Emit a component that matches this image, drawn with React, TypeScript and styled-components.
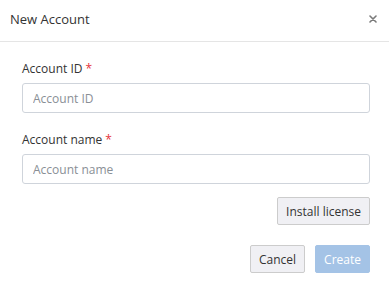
import React from 'react';
import styled, { createGlobalStyle } from 'styled-components';

const Global = createGlobalStyle`
	body {
		margin: 0;
		background: #ffffff;
		font-family: 'Open Sans', 'Liberation Sans', sans-serif;
	}
`;

const Dialog = styled.div`
	width: 389px;
	height: 288px;
	background: #ffffff;
	display: flex;
	flex-direction: column;
`;

const Header = styled.div`
	display: flex;
	align-items: center;
	justify-content: space-between;
	padding: 0 9px 0 10px;
	border-bottom: 1px solid #e5e5e5;
	box-sizing: border-box;
	height: 42px;
`;

const Title = styled.div`
	font-size: 13px;
	color: #333333;
	margin-top: -4px;
`;

const Close = styled.div`
	width: 14px;
	height: 14px;
	display: flex;
	align-items: center;
	justify-content: center;
	margin-top: -4px;
`;

const Body = styled.div`
	padding: 19px 19px 0 22px;
	display: flex;
	flex-direction: column;
`;

const Field = styled.div`
	display: flex;
	flex-direction: column;
	margin-bottom: 19px;
`;

const Label = styled.label`
	font-size: 12px;
	line-height: 16px;
	color: #333333;
	margin-bottom: 6px;
`;

const Required = styled.span`
	color: #e5323c;
	margin-left: 3px;
`;

const Input = styled.input`
	height: 30px;
	box-sizing: border-box;
	border: 1px solid #cfd4db;
	border-radius: 3px;
	padding: 0 10px;
	font-family: inherit;
	font-size: 12px;
	color: #333333;
	outline: none;
	&::placeholder {
		color: #8a8f96;
	}
`;

const Row = styled.div<{ $top: number }>`
	display: flex;
	justify-content: flex-end;
	gap: 10px;
	margin-top: ${(p) => p.$top}px;
`;

const Button = styled.button<{ $primary?: boolean }>`
	height: 28px;
	box-sizing: border-box;
	padding: 0 8px;
	border-radius: 2px;
	font-family: inherit;
	font-size: 12px;
	border: 1px solid ${(p) => (p.$primary ? '#a4c3e6' : '#cccccc')};
	background: ${(p) => (p.$primary ? '#a4c3e6' : '#f0f0f4')};
	color: ${(p) => (p.$primary ? '#ffffff' : '#333333')};
`;

export default function App() {
	return (
		<Dialog>
			<Global />
			<Header>
				<Title>New Account</Title>
				<Close>
					<svg width="8" height="8" viewBox="0 0 8 8">
						<path d="M1 1L7 7M7 1L1 7" stroke="#7a7a7a" strokeWidth="1.6" strokeLinecap="round" />
					</svg>
				</Close>
			</Header>
			<Body>
				<Field>
					<Label>
						Account ID<Required>*</Required>
					</Label>
					<Input placeholder="Account ID" />
				</Field>
				<Field>
					<Label>
						Account name<Required>*</Required>
					</Label>
					<Input placeholder="Account name" />
				</Field>
				<Row $top={-6}>
					<Button>Install license</Button>
				</Row>
				<Row $top={20}>
					<Button>Cancel</Button>
					<Button $primary>Create</Button>
				</Row>
			</Body>
		</Dialog>
	);
}
